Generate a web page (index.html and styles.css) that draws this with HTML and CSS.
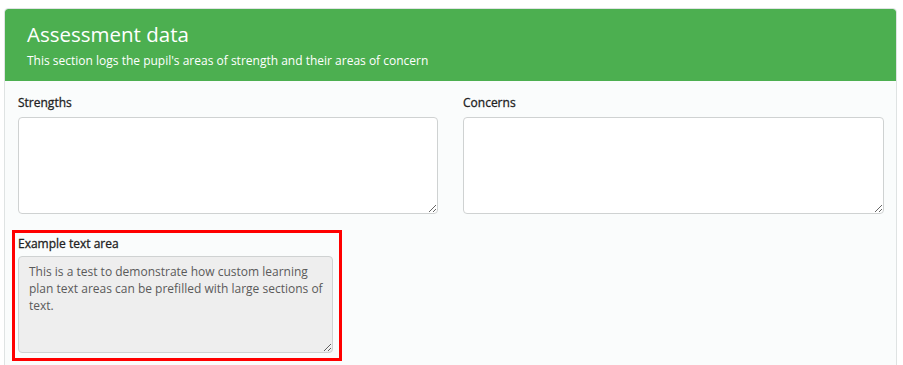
FILE: index.html
```html
<!DOCTYPE html>
<html>
<head>
<meta charset="utf-8">
<link rel="stylesheet" href="styles.css">
</head>
<body>
<div class="panel">
  <div class="panel-heading">
    <h2 class="title">Assessment data</h2>
    <p class="subtitle">This section logs the pupil's areas of strength and their areas of concern</p>
  </div>
  <div class="panel-body">
    <div class="row">
      <div class="field">
        <label class="label">Strengths</label>
        <textarea class="input"></textarea>
      </div>
      <div class="field">
        <label class="label">Concerns</label>
        <textarea class="input"></textarea>
      </div>
    </div>
    <div class="highlight">
      <div class="field narrow">
        <label class="label">Example text area</label>
        <textarea class="input readonly" readonly>This is a test to demonstrate how custom learning plan text areas can be prefilled with large sections of text.</textarea>
      </div>
    </div>
  </div>
</div>
</body>
</html>
```
FILE: styles.css
```css
html, body {
  margin: 0;
  padding: 0;
  background: #ffffff;
  font-family: "Open Sans", "Liberation Sans", sans-serif;
}
body {
  padding: 8px 6px 0 4px;
}
.panel {
  border: 1px solid #dfe3e3;
  border-radius: 4px;
  background: #fafcfc;
  height: 380px;
  overflow: hidden;
}
.panel-heading {
  background: #4caf50;
  color: #ffffff;
  height: 72px;
  box-sizing: border-box;
  padding: 12px 22px 0 22px;
  border-radius: 3px 3px 0 0;
}
.title {
  margin: 0;
  font-size: 20.5px;
  font-weight: 400;
  line-height: 26px;
}
.subtitle {
  margin: 6px 0 0 0;
  font-size: 12px;
  line-height: 16px;
}
.panel-body {
  padding: 14px 12px 0 13px;
}
.row {
  display: grid;
  grid-template-columns: 420px 421px;
  column-gap: 25px;
}
.field {
  display: flex;
  flex-direction: column;
}
.label {
  font-size: 12px;
  font-weight: 400;
  color: #222222;
  line-height: 16px;
  margin-bottom: 6px;
  -webkit-text-stroke: 0.3px #222222;
}
.input {
  box-sizing: border-box;
  width: 100%;
  height: 97px;
  border: 1px solid #cfd2d2;
  border-radius: 4px;
  background: #ffffff;
  resize: vertical;
  margin: 0;
  font-family: "Open Sans", "Liberation Sans", sans-serif;
}
.highlight {
  margin-top: 16px;
  margin-left: -6px;
  width: 315px;
  border: 3px solid #ff0000;
  padding: 3px 6px 5px 3px;
}
.narrow .label {
  margin-bottom: 4px;
}
.readonly {
  background: #eeeeee;
  color: #5a5a5a;
  font-size: 12px;
  line-height: 17px;
  padding: 6px 4px 6px 10px;
  height: 97px;
}
```
